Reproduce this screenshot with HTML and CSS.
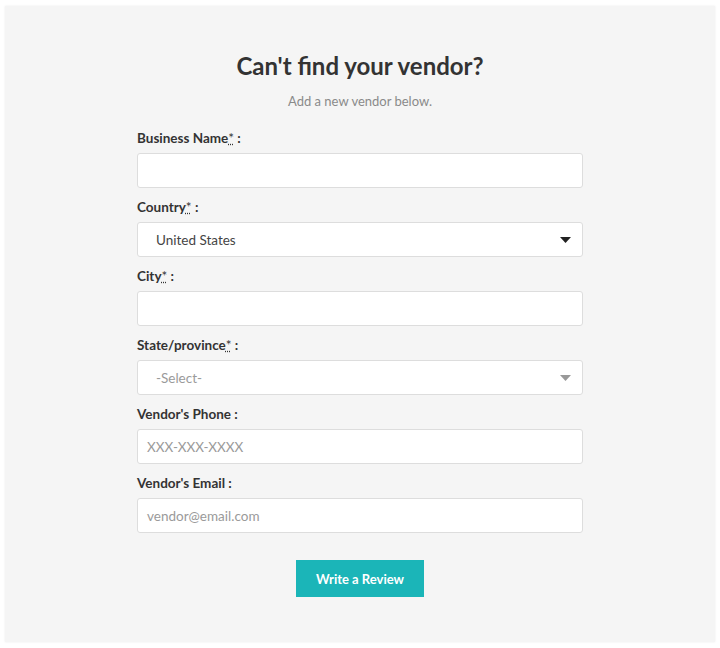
FILE: index.html
```html
<!DOCTYPE html>
<html lang="en">
<head>
<meta charset="utf-8">
<title>Can't find your vendor?</title>
<link rel="stylesheet" href="styles.css">
</head>
<body>
<div class="panel">
  <h1 class="title">Can't find your vendor?</h1>
  <p class="subtitle">Add a new vendor below.</p>
  <form class="form">
    <div class="field">
      <label class="label">Business Name<abbr class="req">*</abbr> :</label>
      <div class="input"></div>
    </div>
    <div class="field">
      <label class="label">Country<abbr class="req">*</abbr> :</label>
      <div class="input select"><span class="value">United States</span>
        <svg class="caret dark" width="11" height="6" viewBox="0 0 11 6"><path d="M0 0H11L5.5 6Z"/></svg>
      </div>
    </div>
    <div class="field">
      <label class="label">City<abbr class="req">*</abbr> :</label>
      <div class="input"></div>
    </div>
    <div class="field">
      <label class="label">State/province<abbr class="req">*</abbr> :</label>
      <div class="input select"><span class="value placeholder">-Select-</span>
        <svg class="caret light" width="11" height="6" viewBox="0 0 11 6"><path d="M0 0H11L5.5 6Z"/></svg>
      </div>
    </div>
    <div class="field">
      <label class="label">Vendor's Phone :</label>
      <div class="input"><span class="placeholder">XXX-XXX-XXXX</span></div>
    </div>
    <div class="field">
      <label class="label">Vendor's Email :</label>
      <div class="input"><span class="placeholder">vendor@email.com</span></div>
    </div>
    <div class="actions">
      <button type="button" class="btn">Write a Review</button>
    </div>
  </form>
</div>
</body>
</html>
```

FILE: styles.css
```css
html, body {
  margin: 0;
  padding: 0;
  background: #ffffff;
  font-family: Lato, "Open Sans", "Liberation Sans", sans-serif;
  color: #333333;
}

.panel {
  margin: 6px 5px 6px 5px;
  height: 636px;
  box-sizing: border-box;
  background: #f5f5f5;
  box-shadow: 0 0 2px rgba(0,0,0,0.08);
  padding-top: 45px;
}

.title {
  margin: 0;
  text-align: center;
  font-size: 24px;
  line-height: 30px;
  font-weight: 700;
  color: #333333;
}

.subtitle {
  margin: 12px 0 0 0;
  text-align: center;
  font-size: 13px;
  line-height: 16px;
  color: #8a8a8a;
}

.form {
  width: 446px;
  margin: 21px auto 0 auto;
  display: flex;
  flex-direction: column;
}

.field {
  display: flex;
  flex-direction: column;
  margin-bottom: 11px;
}

.label {
  font-size: 13.5px;
  line-height: 16px;
  font-weight: 700;
  color: #333333;
  margin-bottom: 7px;
}

.req {
  text-decoration: underline;
  text-decoration-style: dotted;
  font-weight: 400;
}

.input {
  height: 35px;
  box-sizing: border-box;
  background: #ffffff;
  border: 1px solid #dddddd;
  border-radius: 3px;
  display: flex;
  align-items: center;
  padding: 0 9px;
  font-size: 13.5px;
}

.placeholder {
  color: #9a9a9a;
}

.select {
  padding: 0 11px 0 18px;
  justify-content: space-between;
}

.value {
  color: #444444;
}

.value.placeholder {
  color: #9a9a9a;
}

.caret.dark { fill: #222222; }
.caret.light { fill: #999999; }

.actions {
  display: flex;
  justify-content: center;
  margin-top: 16px;
}

.btn {
  width: 128px;
  height: 37px;
  border: none;
  border-radius: 0;
  background: #1bb5b8;
  color: #ffffff;
  font-family: Lato, "Open Sans", "Liberation Sans", sans-serif;
  font-size: 13px;
  font-weight: 700;
  cursor: pointer;
}
```
